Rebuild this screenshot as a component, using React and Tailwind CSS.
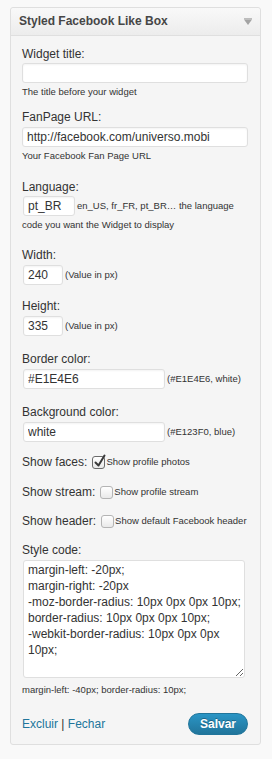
import React from "react";

// Widget settings panel: "Styled Facebook Like Box"

const STYLE_CODE =
  "margin-left: -20px;\nmargin-right: -20px\n-moz-border-radius: 10px 0px 0px 10px;\nborder-radius: 10px 0px 0px 10px;\n-webkit-border-radius: 10px 0px 0px 10px;";

function Label({ children, className = "" }) {
  return (
    <div className={`text-[12px] leading-[16px] text-[#333] ${className}`}>
      {children}
    </div>
  );
}

function Hint({ children, className = "" }) {
  return (
    <div className={`text-[9.5px] leading-[12px] text-[#333] ${className}`}>
      {children}
    </div>
  );
}

function TextInput({ value = "", className = "" }) {
  return (
    <input
      type="text"
      readOnly
      value={value}
      className={`block h-[20px] rounded-[3px] border border-[#dfdfdf] bg-white pl-[4px] text-[12px] text-[#333] shadow-[inset_0_1px_2px_rgba(0,0,0,0.05)] outline-none ${className}`}
    />
  );
}

function Checkbox({ checked }) {
  return (
    <span
      className={`relative inline-block h-[13px] w-[13px] shrink-0 rounded-[3px] border bg-gradient-to-b from-[#ffffff] to-[#e9e9e9] ${
        checked ? "border-[#6b6b6b]" : "border-[#b4b4b4]"
      }`}
    >
      {checked && (
        <svg
          className="absolute left-[1px] top-[-3px]"
          width="12"
          height="14"
          viewBox="0 0 12 14"
          fill="none"
          aria-hidden="true"
        >
          <path
            d="M1.5 8.5 L4.5 11.5 L10.5 1.5"
            stroke="#3a3a3a"
            strokeWidth="2"
            strokeLinecap="round"
            strokeLinejoin="round"
          />
        </svg>
      )}
    </span>
  );
}

function CheckRow({ label, text, checked, className = "" }) {
  return (
    <div className={`flex h-[16px] items-center ${className}`}>
      <span className="text-[12px] leading-[16px] text-[#333]">{label}</span>
      <span className="ml-[5px] flex items-center">
        <Checkbox checked={checked} />
      </span>
      <span className="ml-[1px] text-[9.5px] leading-[12px] text-[#333]">
        {text}
      </span>
    </div>
  );
}

export default function App() {
  return (
    <div
      className="min-h-screen bg-[#f9f9f9] pl-[10px] pt-[7px]"
      style={{ fontFamily: '"Liberation Sans", Arial, sans-serif' }}
    >
      <div className="w-[251px] rounded-[3px] border border-[#dfdfdf] bg-[#f5f5f5]">
        {/* header */}
        <div className="flex h-[28px] items-center justify-between rounded-t-[3px] border-b border-[#dfdfdf] bg-gradient-to-b from-[#f9f9f9] to-[#ececec] pb-[1px] pl-[8px] pr-[8px]">
          <span className="text-[12px] font-bold text-[#464646]">
            Styled Facebook Like Box
          </span>
          <svg width="8" height="7" viewBox="0 0 8 7" aria-hidden="true">
            <rect x="0" y="0" width="8" height="1.5" fill="#bcbcbc" />
            <path d="M0 1.5 H8 L4 7 Z" fill="#a3a3a3" />
          </svg>
        </div>

        {/* form body */}
        <div className="px-[11px] pb-[9px] pt-[10px]">
          <Label className="mb-[1px]">Widget title:</Label>
          <TextInput className="w-[226px]" />
          <Hint className="mt-[3px]">The title before your widget</Hint>

          <Label className="mb-[2px] mt-[11px]">FanPage URL:</Label>
          <TextInput className="w-[226px]" value="http://facebook.com/universo.mobi" />
          <Hint className="mt-[3px]">Your Facebook Fan Page URL</Hint>

          <Label className="mb-[1px] mt-[17px]">Language:</Label>
          <div className="flex items-center">
            <TextInput className="ml-[1px] w-[52px]" value="pt_BR" />
            <span className="ml-[2px] text-[9.5px] leading-[12px] text-[#333]">
              en_US, fr_FR, pt_BR… the language
            </span>
          </div>
          <Hint className="mt-[3px]">code you want the Widget to display</Hint>

          <Label className="mb-[2px] mt-[16px]">Width:</Label>
          <div className="flex items-center">
            <TextInput className="ml-[1px] w-[40px]" value="240" />
            <span className="ml-[2px] text-[9.5px] leading-[12px] text-[#333]">
              (Value in px)
            </span>
          </div>

          <Label className="mb-[2px] mt-[13px]">Height:</Label>
          <div className="flex items-center">
            <TextInput className="ml-[1px] w-[40px]" value="335" />
            <span className="ml-[2px] text-[9.5px] leading-[12px] text-[#333]">
              (Value in px)
            </span>
          </div>

          <Label className="mb-[2px] mt-[15px]">Border color:</Label>
          <div className="flex items-center">
            <TextInput className="ml-[1px] w-[142px]" value="#E1E4E6" />
            <span className="ml-[2px] text-[9.5px] leading-[12px] text-[#333]">
              (#E1E4E6, white)
            </span>
          </div>

          <Label className="mb-[2px] mt-[15px]">Background color:</Label>
          <div className="flex items-center">
            <TextInput className="ml-[1px] w-[142px]" value="white" />
            <span className="ml-[2px] text-[9.5px] leading-[12px] text-[#333]">
              (#E123F0, blue)
            </span>
          </div>

          <CheckRow className="mt-[12px]" label="Show faces:" text="Show profile photos" checked />
          <CheckRow className="mt-[14px]" label="Show stream:" text="Show profile stream" />
          <CheckRow className="mt-[13px]" label="Show header:" text="Show default Facebook header" />

          <Label className="mb-[2px] mt-[13px]">Style code:</Label>
          <textarea
            readOnly
            value={STYLE_CODE}
            className="ml-[1px] block h-[118px] w-[222px] overflow-hidden rounded-[3px] border border-[#dfdfdf] bg-white pl-[4px] pr-[1px] pt-[1px] text-[12px] leading-[16px] text-[#333] outline-none"
          />
          <Hint className="mt-[6px]">margin-left: -40px; border-radius: 10px;</Hint>

          {/* footer actions */}
          <div className="mt-[17px] flex items-center justify-between">
            <div className="text-[12px] leading-[16px]">
              <a href="#" className="text-[#21759b]">Excluir</a>
              <span className="text-[#333]"> | </span>
              <a href="#" className="text-[#21759b]">Fechar</a>
            </div>
            <button
              type="button"
              className="mr-[1px] h-[22px] w-[60px] rounded-full border border-[#21759b] bg-gradient-to-b from-[#2a95c5] to-[#21759b] text-[12px] font-bold text-white [text-shadow:0_-1px_0_rgba(0,0,0,0.3)]"
            >
              Salvar
            </button>
          </div>
        </div>
      </div>
    </div>
  );
}
